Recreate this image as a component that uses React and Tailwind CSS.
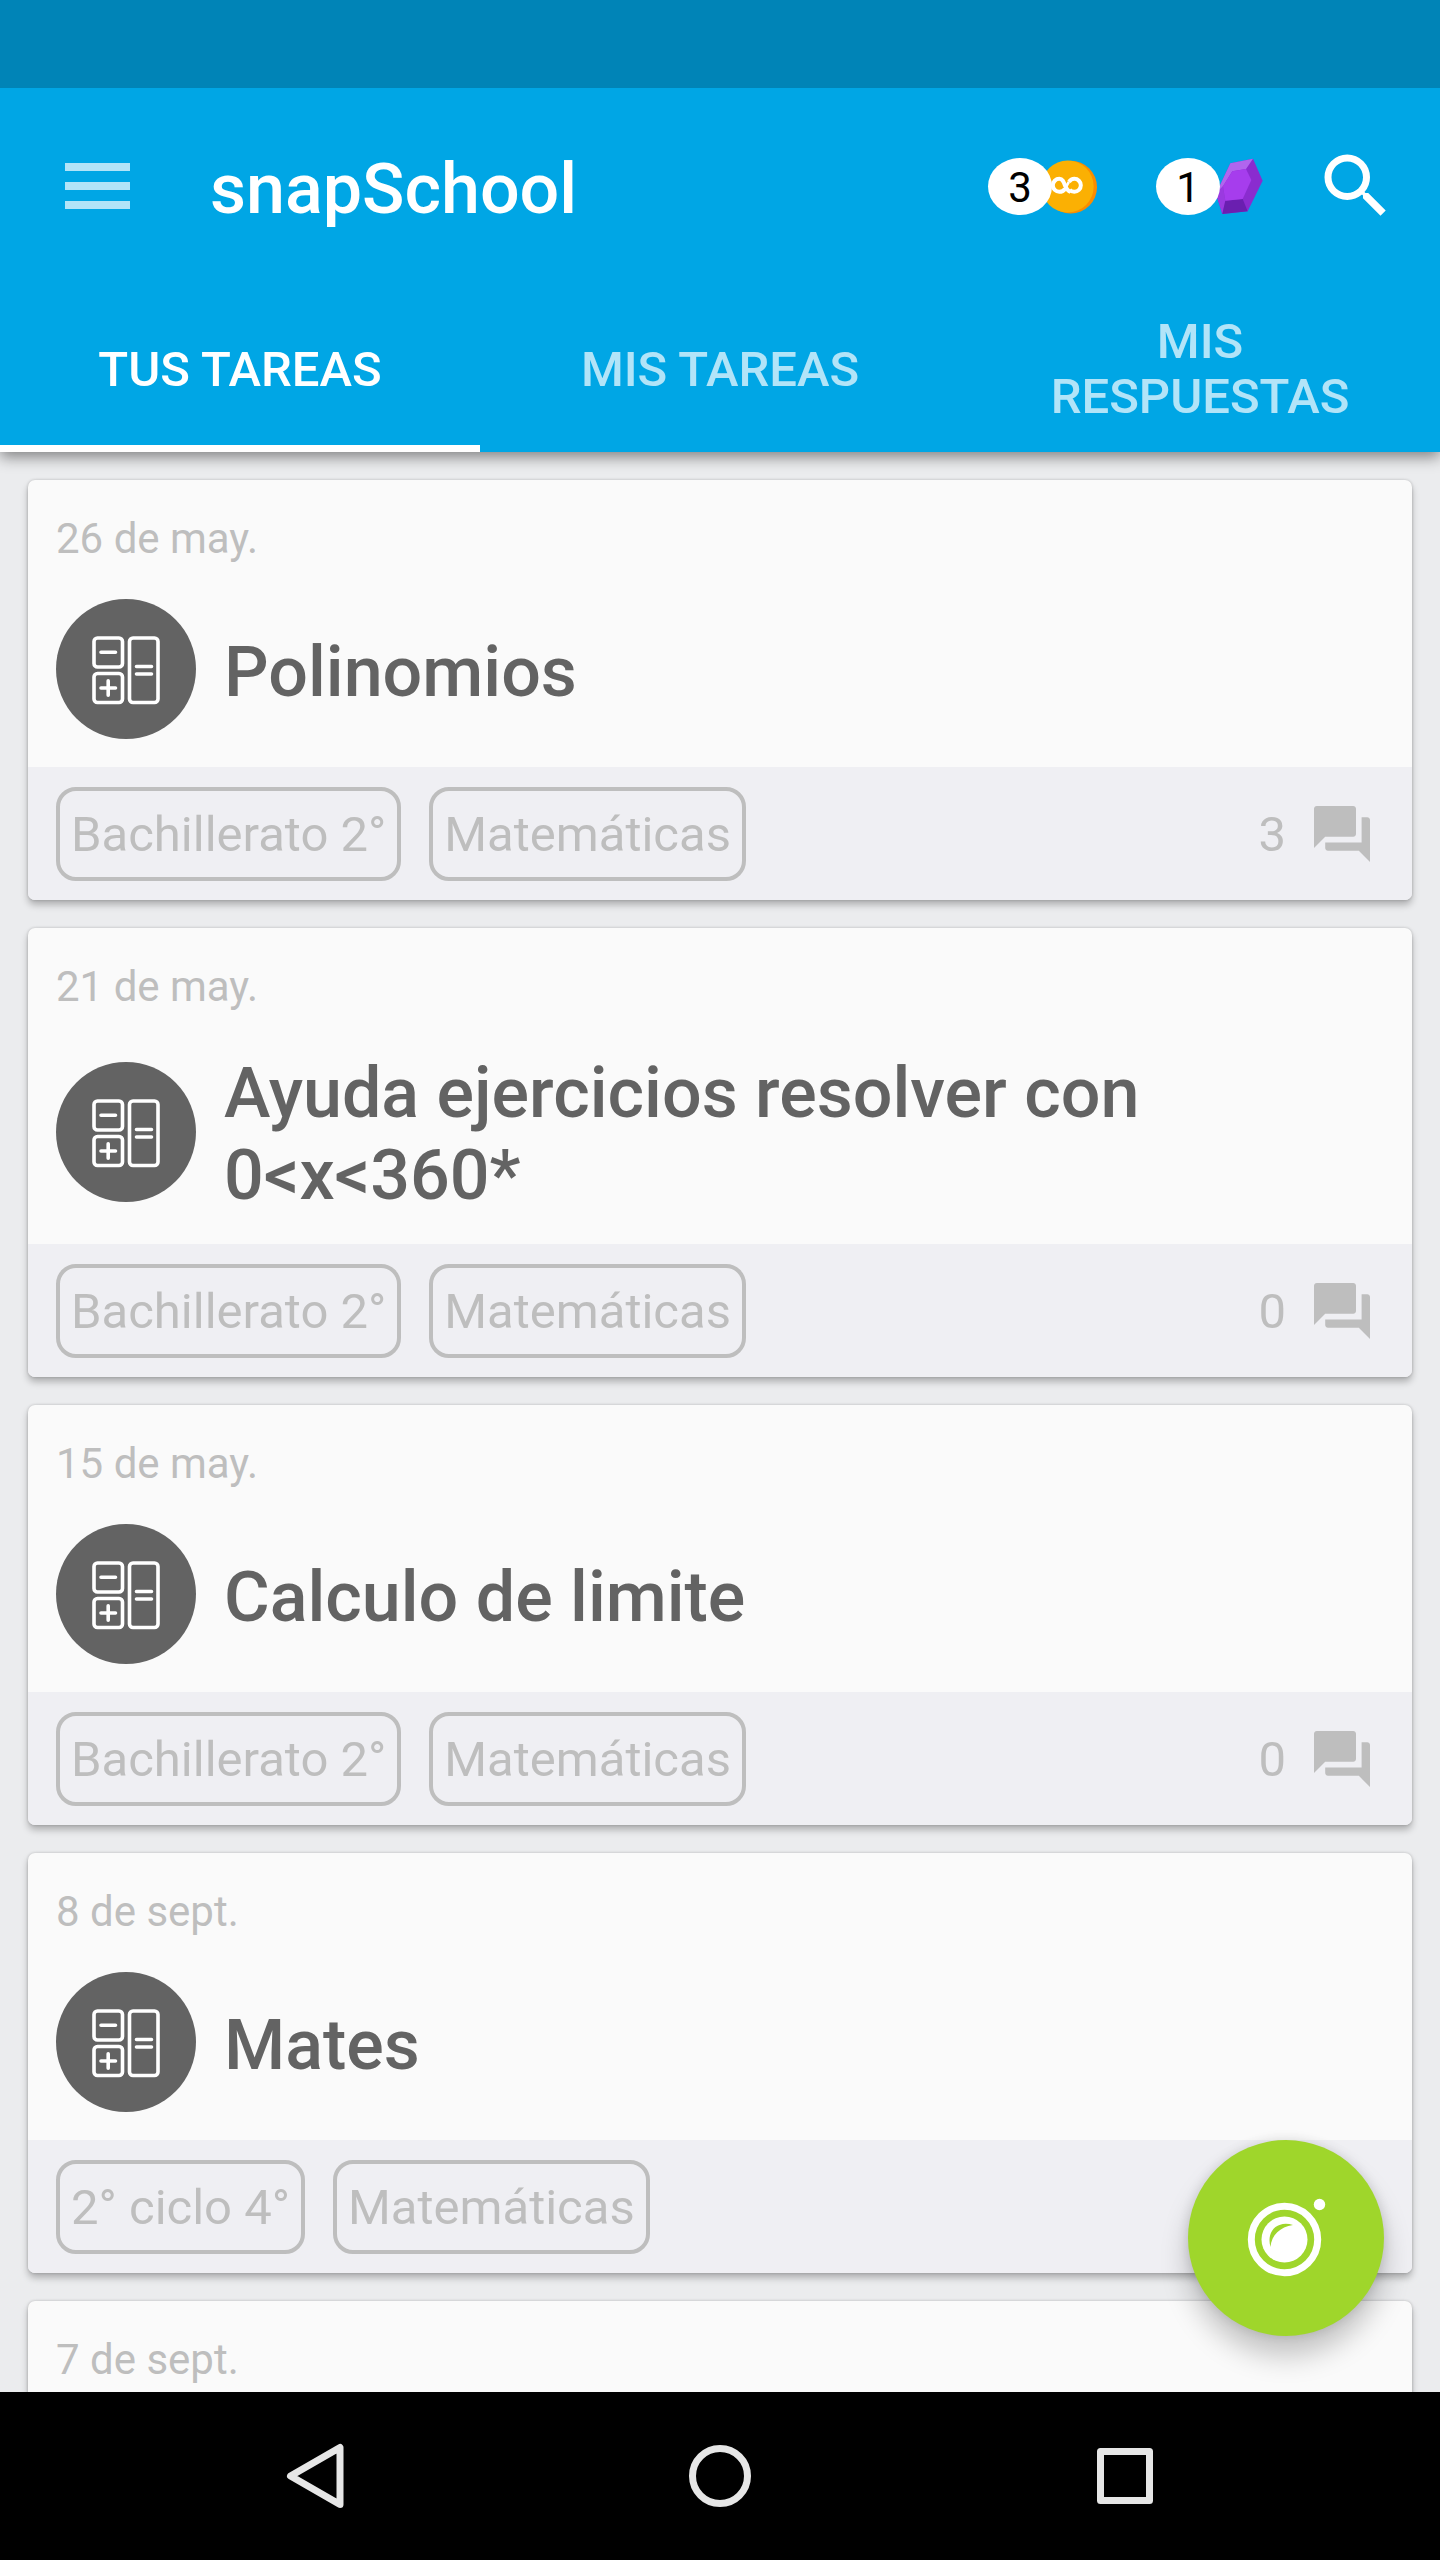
const TASKS = [
  { date: "26 de may.", title: "Polinomios", level: "Bachillerato 2°", subject: "Matemáticas", replies: 3 },
  { date: "21 de may.", title: "Ayuda ejercicios resolver con 0<x<360*", level: "Bachillerato 2°", subject: "Matemáticas", replies: 0 },
  { date: "15 de may.", title: "Calculo de limite", level: "Bachillerato 2°", subject: "Matemáticas", replies: 0 },
  { date: "8 de sept.", title: "Mates", level: "2° ciclo 4°", subject: "Matemáticas" },
  { date: "7 de sept." },
];

const TABS = ["TUS TAREAS", "MIS TAREAS", "MIS RESPUESTAS"];

function MenuIcon() {
  return (
    <svg className="h-[46px] w-[65px]" viewBox="0 0 65 46" fill="#b2e4f8" aria-hidden="true">
      <rect width="65" height="8" />
      <rect y="19" width="65" height="8" />
      <rect y="38" width="65" height="8" />
    </svg>
  );
}

function CoinIcon() {
  return (
    <svg className="h-[55px] w-[54px]" viewBox="252 118 162 164" aria-hidden="true">
      <circle cx="332" cy="202" r="79" fill="#fb8c00" />
      <circle cx="323" cy="200" r="78" fill="#fbb003" />
      <path
        d="M331 216C322 213 319 206 315 197C311 186 308 177 298 177a19 19 0 0 0 0 39C306 216 311 213 315 207M327 186C331 180 336 177 343 177a19 19 0 0 1 0 39C337 216 333 215 329 210"
        fill="none" stroke="#fff" strokeWidth="12" strokeLinejoin="round"
      />
      <path d="M315 207C320 200 322 192 327 186" fill="none" stroke="#fff" strokeWidth="8" />
    </svg>
  );
}

function GemIcon() {
  return (
    <svg className="h-14 w-[47px]" viewBox="769 118 141 168" aria-hidden="true">
      <path d="M812 134L880 120L909 186L864 278L788 286L769 225Z" fill="#8a2ccf" />
      <path d="M812 134L880 120L859 151L818 158L790 203L769 225Z" fill="#b165ee" />
      <path d="M769 225L790 203L797 246L788 286Z" fill="#9a3ae0" />
      <path d="M864 278L788 286L797 246L849 241Z" fill="#6a1fb0" />
      <path d="M818 158L859 151L875 184L849 241L797 246L790 203Z" fill="#a63ded" />
    </svg>
  );
}

function SearchIcon() {
  return (
    <svg className="size-[84px]" viewBox="0 0 24 24" fill="#fff" aria-hidden="true">
      <path d="M15.5 14h-.79l-.28-.27A6.471 6.471 0 0 0 16 9.500 6.500 6.500 0 1 0 9.500 16c1.610 0 3.090-.59 4.230-1.570l.27.28v.79l5 4.990L20.490 19l-4.990-5zm-6 0C7.010 14 5 11.990 5 9.500S7.010 5 9.500 5 14 7.010 14 9.500 11.990 14 9.500 14z" />
    </svg>
  );
}

function MathIcon() {
  return (
    <svg className="size-[140px] shrink-0" viewBox="0 0 140 140" aria-hidden="true">
      <circle cx="70" cy="70" r="70" fill="#636363" />
      <g fill="none" stroke="#fff" strokeWidth="3.600" strokeLinecap="round">
        <rect x="38" y="39" width="28.500" height="29" rx="3.500" />
        <rect x="38" y="74.500" width="28.500" height="29" rx="3.500" />
        <rect x="73.500" y="39" width="28.500" height="64.500" rx="3.500" />
        <path d="M45 53.200h14.500M45 89h14.500M52.200 81.800v14.500M80.500 67.500h15M80.500 75h15" />
      </g>
    </svg>
  );
}

function RepliesIcon() {
  return (
    <svg className="size-14" viewBox="2 2 20 20" fill="#bebebe" aria-hidden="true">
      <path d="M21 6h-2v9H6v2c0 .55.45 1 1 1h11l4 4V7c0-.55-.45-1-1-1zm-4 6V3c0-.55-.45-1-1-1H3c-.55 0-1 .45-1 1v14l4-4h10c.55 0 1-.45 1-1z" />
    </svg>
  );
}

function CameraIcon() {
  return (
    <svg className="size-[196px]" viewBox="0 0 196 196" aria-hidden="true">
      <circle cx="96.500" cy="99.500" r="33.200" fill="none" stroke="#fff" strokeWidth="7" />
      <circle cx="96.500" cy="99.500" r="23" fill="#fff" />
      <path d="M82.500 107C78 92 89 80 105 85C92 87 83.500 95 82.500 107Z" fill="#9fd62b" />
      <circle cx="131.500" cy="64.500" r="5.700" fill="#fff" />
    </svg>
  );
}

function Counter({ value, label, children }) {
  return (
    <button type="button" aria-label={label} className="flex items-center">
      <span className="z-10 flex h-[57px] w-16 items-center justify-center rounded-[50%] bg-white pt-[2px] text-[42px] leading-[49px] text-black">
        {value}
      </span>
      {children}
    </button>
  );
}

function Chip({ children }) {
  return (
    <span className="rounded-[20px] border-4 border-[#bebebe] px-[11px] pt-[15px] pb-[13px] text-[49px] leading-[58px] whitespace-nowrap">
      {children}
    </span>
  );
}

function TaskCard({ date, title, level, subject, replies }) {
  return (
    <article className="shrink-0 overflow-hidden rounded-[7px] bg-[#fafafa] shadow-[0_5px_7px_rgba(0,0,0,0.25),0_0_3px_rgba(0,0,0,0.2)]">
      <div className="px-7 pt-7 pb-7">
        <time className="mb-[30px] block text-[42px] leading-[61px] text-[#bebebe]">{date}</time>
        <div className="flex items-center gap-7">
          <MathIcon />
          {title && (
            <h2 className="pt-[5px] text-[70px] leading-[82px] font-medium text-[#636363]">{title}</h2>
          )}
        </div>
      </div>
      {level && (
        <footer className="flex h-[133px] items-center gap-7 bg-[#efeff3] pr-[42px] pl-7 text-[#bebebe]">
          <Chip>{level}</Chip>
          <Chip>{subject}</Chip>
          <span className="ml-auto pt-[2px] text-[49px] leading-[58px]">{replies}</span>
          <RepliesIcon />
        </footer>
      )}
    </article>
  );
}

export default function App() {
  return (
    <div className="flex h-screen flex-col overflow-hidden bg-[#ebecee] font-[Roboto,sans-serif]">
      <header className="z-10 shrink-0 bg-[#00a6e5] shadow-[0_5px_14px_rgba(0,0,0,0.45)]">
        <div className="h-[88px] bg-[#0084b7]" />
        <div className="flex h-[196px] items-center pr-[42px] pl-[65px]">
          <button type="button" aria-label="Menú"><MenuIcon /></button>
          <h1 className="ml-20 pt-[5px] text-[70px] leading-[82px] font-medium text-white">snapSchool</h1>
          <div className="ml-auto flex items-center">
            <Counter value="3" label="Monedas"><span className="-ml-2"><CoinIcon /></span></Counter>
            <span className="w-[58px]" />
            <Counter value="1" label="Gemas"><span className="-ml-1"><GemIcon /></span></Counter>
            <button type="button" aria-label="Buscar" className="ml-[51px]"><SearchIcon /></button>
          </div>
        </div>
        <div role="tablist" className="grid h-[168px] grid-cols-3">
          {TABS.map((tab, i) => (
            <button
              key={tab}
              type="button"
              role="tab"
              aria-selected={i === 0}
              className={
                i === 0
                  ? "border-b-[7px] border-white px-[42px] pt-[9px] text-[49px] leading-[55px] font-medium text-white"
                  : "border-b-[7px] border-transparent px-[42px] pt-[9px] text-[49px] leading-[55px] font-medium text-[#b2e4f8]"
              }
            >
              {tab}
            </button>
          ))}
        </div>
      </header>

      <main className="relative min-h-0 flex-1 overflow-hidden">
        <div className="flex h-full flex-col gap-7 overflow-hidden p-7">
          {TASKS.map((task) => <TaskCard key={task.date} {...task} />)}
        </div>
        <button
          type="button"
          aria-label="Nueva tarea"
          className="absolute right-14 bottom-14 size-[196px] rounded-full bg-[#9fd62b] shadow-[0_20px_28px_rgba(0,0,0,0.22),0_0_12px_rgba(0,0,0,0.12)]"
        >
          <CameraIcon />
        </button>
      </main>

      <nav className="flex h-[168px] shrink-0 items-center bg-black px-28">
        <button type="button" aria-label="Atrás" className="flex flex-1 justify-center">
          <svg className="size-[70px]" viewBox="0 0 70 70" fill="none" stroke="#e6e6e6" strokeWidth="7" strokeLinejoin="round" aria-hidden="true">
            <path d="M60 6.500V63.500L10.500 35Z" />
          </svg>
        </button>
        <button type="button" aria-label="Inicio" className="flex flex-1 justify-center">
          <svg className="size-[70px]" viewBox="0 0 70 70" fill="none" stroke="#e6e6e6" strokeWidth="7" aria-hidden="true">
            <circle cx="35" cy="35" r="27.500" />
          </svg>
        </button>
        <button type="button" aria-label="Recientes" className="flex flex-1 justify-center">
          <svg className="size-[70px]" viewBox="0 0 70 70" fill="none" stroke="#e6e6e6" strokeWidth="7" strokeLinejoin="round" aria-hidden="true">
            <rect x="10.500" y="10.500" width="49" height="49" />
          </svg>
        </button>
      </nav>
    </div>
  );
}
